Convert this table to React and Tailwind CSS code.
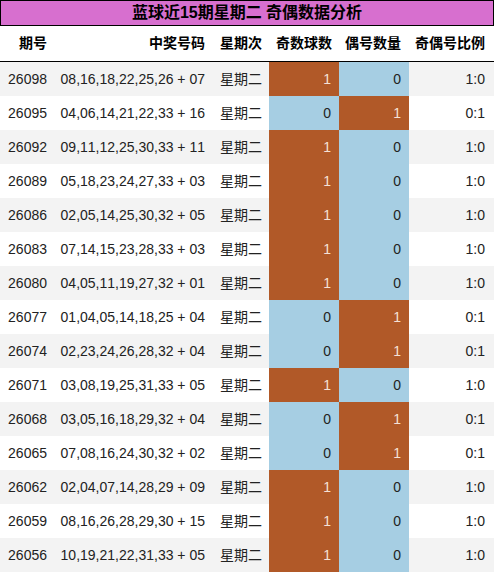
import React from "react";

const rows = [
  ["26098", "08,16,18,22,25,26 + 07", 1, 0, "1:0"],
  ["26095", "04,06,14,21,22,33 + 16", 0, 1, "0:1"],
  ["26092", "09,11,12,25,30,33 + 11", 1, 0, "1:0"],
  ["26089", "05,18,23,24,27,33 + 03", 1, 0, "1:0"],
  ["26086", "02,05,14,25,30,32 + 05", 1, 0, "1:0"],
  ["26083", "07,14,15,23,28,33 + 03", 1, 0, "1:0"],
  ["26080", "04,05,11,19,27,32 + 01", 1, 0, "1:0"],
  ["26077", "01,04,05,14,18,25 + 04", 0, 1, "0:1"],
  ["26074", "02,23,24,26,28,32 + 04", 0, 1, "0:1"],
  ["26071", "03,08,19,25,31,33 + 05", 1, 0, "1:0"],
  ["26068", "03,05,16,18,29,32 + 04", 0, 1, "0:1"],
  ["26065", "07,08,16,24,30,32 + 02", 0, 1, "0:1"],
  ["26062", "02,04,07,14,28,29 + 09", 1, 0, "1:0"],
  ["26059", "08,16,26,28,29,30 + 15", 1, 0, "1:0"],
  ["26056", "10,19,21,22,31,33 + 05", 1, 0, "1:0"],
];

const font = { fontFamily: '"Liberation Sans", "Noto Sans CJK SC", sans-serif' };

function Cell({ v }) {
  const odd = v === 1;
  return (
    <div
      className={
        "w-[70px] flex items-center justify-end pr-[8px] " +
        (odd ? "bg-[#b15928] text-[#f5e1d5]" : "bg-[#a6cee3] text-[#222]")
      }
    >
      {v}
    </div>
  );
}

export default function App() {
  return (
    <div className="w-[494px] h-[573px] bg-white text-[14px] text-[#222] [font-kerning:none]" style={font}>
      <div className="h-[26px] border border-black bg-[#d76fcf] flex items-center justify-center text-[16px] font-bold text-black">
        蓝球近15期星期二 奇偶数据分析
      </div>
      <div className="h-[36px] flex font-bold text-black border-b border-black">
        <div className="w-[55px] flex items-center justify-end pr-[8px]">期号</div>
        <div className="w-[157px] flex items-center justify-end pr-[7px]">中奖号码</div>
        <div className="w-[57px] flex items-center pl-[8px]">星期次</div>
        <div className="w-[70px] flex items-center justify-end pr-[7px]">奇数球数</div>
        <div className="w-[70px] flex items-center justify-end pr-[8px]">偶号数量</div>
        <div className="w-[85px] flex items-center justify-end pr-[9px]">奇偶号比例</div>
      </div>
      {rows.map((r, i) => (
        <div key={r[0]} className={"h-[34px] flex " + (i % 2 === 0 ? "bg-[#f3f3f3]" : "bg-white")}>
          <div className="w-[55px] flex items-center justify-end pr-[8px]">{r[0]}</div>
          <div className="w-[157px] flex items-center justify-end pr-[7px]">{r[1]}</div>
          <div className="w-[57px] flex items-center pl-[8px]">星期二</div>
          <Cell v={r[2]} />
          <Cell v={r[3]} />
          <div className="w-[85px] flex items-center justify-end pr-[9px]">{r[4]}</div>
        </div>
      ))}
    </div>
  );
}
